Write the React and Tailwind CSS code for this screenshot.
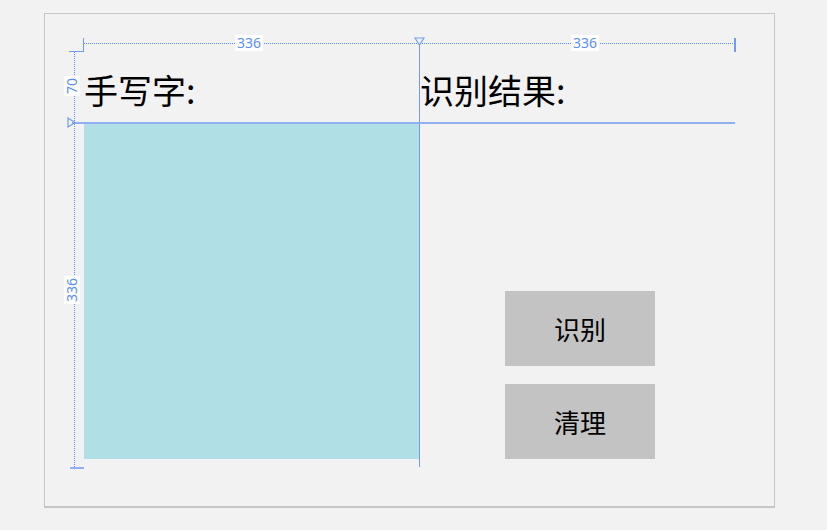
import React from "react";

const cjk = { fontFamily: '"Noto Sans CJK SC", "Noto Sans", sans-serif' };

export default function App() {
  return (
    <div
      className="relative w-[827px] h-[530px] bg-[#f2f2f2] pt-[13px] pl-[44px]"
      style={cjk}
    >
      {/* frame */}
      <div className="w-[731px] h-[495px] border border-[#c6c6c6] border-b-2 pl-[39px] pt-[39px] flex flex-col">
        {/* headings */}
        <div className="flex h-[70px] items-end pb-[16px] text-[34px] leading-none text-black">
          <div className="w-[336px]">手写字:</div>
          <div>识别结果:</div>
        </div>
        {/* body */}
        <div className="flex">
          <div className="w-[335px] h-[336px] bg-[#b0dfe5]" />
          <div className="flex flex-col justify-end gap-[18px] pl-[86px]">
            <Btn>识别</Btn>
            <Btn>清理</Btn>
          </div>
        </div>
      </div>

      {/* design guides overlay */}
      <Guides />
    </div>
  );
}

function Btn({ children }) {
  return (
    <button className="w-[150px] h-[75px] bg-[#c3c3c3] text-[26px] text-black flex items-center justify-center">
      {children}
    </button>
  );
}

function Label({ children, className }) {
  return (
    <span
      className={`absolute bg-white px-[2px] text-[14px] leading-[16px] text-[#5b8ff0] ${className}`}
      style={{ fontFamily: '"Noto Sans", sans-serif' }}
    >
      {children}
    </span>
  );
}

function Guides() {
  return (
    <div className="pointer-events-none absolute inset-0">
      {/* top dimension */}
      <div className="absolute left-[84px] top-[43px] h-px w-[651px] bg-[repeating-linear-gradient(90deg,#5b8ff0_0_1px,transparent_1px_2px)]" />
      <div className="absolute left-[83px] top-[38px] h-[14px] w-px bg-[#6f9cf0]" />
      <div className="absolute left-[734px] top-[38px] h-[14px] w-[2px] bg-[#6f9cf0]" />
      <Label className="left-[235px] top-[35px]">336</Label>
      <Label className="left-[571px] top-[35px]">336</Label>
      <svg className="absolute left-[414px] top-[37px]" width="11" height="9" viewBox="0 0 11 9">
        <path d="M1 1 H10 L5.5 8 Z" fill="none" stroke="#6f9cf0" strokeWidth="1.2" />
      </svg>

      {/* vertical centre line */}
      <div className="absolute left-[419px] top-[44px] h-[423px] w-px bg-[#6f9cf0]" />
      {/* horizontal header line */}
      <div className="absolute left-[72px] top-[122px] h-[2px] w-[663px] bg-[#8fb0f0]" />

      {/* left dimension */}
      <div className="absolute left-[69px] top-[51px] h-px w-[15px] bg-[#6f9cf0]" />
      <div className="absolute left-[74px] top-[52px] h-[415px] w-px bg-[repeating-linear-gradient(180deg,#5b8ff0_0_1px,transparent_1px_2px)]" />
      <div className="absolute left-[70px] top-[467px] h-[2px] w-[14px] bg-[#8fb0f0]" />
      <svg className="absolute left-[67px] top-[117px]" width="9" height="11" viewBox="0 0 9 11">
        <path d="M1 1 V10 L8 5.5 Z" fill="none" stroke="#6f9cf0" strokeWidth="1.2" />
      </svg>
      <Label className="left-[62px] top-[78px] -rotate-90">70</Label>
      <Label className="left-[58px] top-[282px] -rotate-90">336</Label>
    </div>
  );
}
